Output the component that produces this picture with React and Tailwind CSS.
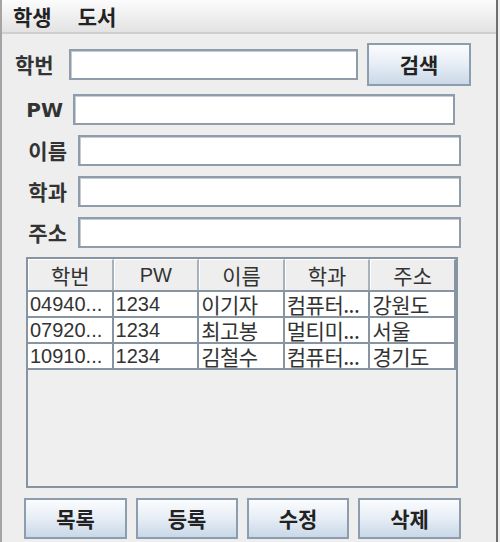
import React from 'react'

const font = { fontFamily: '"Noto Sans CJK KR", "Liberation Sans", sans-serif' }

const rows = [
  ['04940...', '1234', '이기자', '컴퓨터...', '강원도'],
  ['07920...', '1234', '최고봉', '멀티미...', '서울'],
  ['10910...', '1234', '김철수', '컴퓨터...', '경기도'],
]

const headers = ['학번', 'PW', '이름', '학과', '주소']

const Field = ({ className }) => (
  <div className={`h-[31px] bg-white border-2 border-[#8f9caa] shadow-[inset_1px_1px_0_#c5ccd4] ${className}`} />
)

const Btn = ({ children, className }) => (
  <button className={`h-[41px] bg-gradient-to-b from-[#fbfcfe] via-[#e6edf5] to-[#c9d8e8] border-2 border-[#8d9db0] text-[21px] font-bold text-[#222] leading-none ${className}`}>
    {children}
  </button>
)

export default function App() {
  return (
    <div className="w-[500px] h-[542px] bg-[#eeeeee] overflow-hidden" style={font}>
      <div className="w-[498px] h-[542px] border-l-2 border-r-2 border-l-[#a4a4a4] border-r-[#6f6f6f] flex flex-col">
        <div className="h-[34px] shrink-0 bg-gradient-to-b from-[#fcfcfc] to-[#e3e3e3] border-b-2 border-[#cfcfcf] flex items-center text-[21px] font-bold text-[#222] leading-none">
          <span className="ml-[11px]">학생</span>
          <span className="ml-[26px]">도서</span>
        </div>

        <div className="flex items-center mt-[9px] h-[43px]">
          <span className="ml-[13px] w-[46px] text-[21px] font-bold text-[#333] leading-none">학번</span>
          <Field className="ml-[8px] w-[289px]" />
          <Btn className="ml-[9px] w-[104px] h-[43px]">검색</Btn>
        </div>

        <div className="flex items-center mt-[8px]">
          <span className="w-[61px] text-right text-[20px] font-bold text-[#333] leading-none" style={{ fontFamily: '"DejaVu Sans", sans-serif' }}>PW</span>
          <Field className="ml-[10px] w-[382px]" />
        </div>

        {['이름', '학과', '주소'].map((l) => (
          <div key={l} className="flex items-center mt-[10px]">
            <span className="w-[65px] text-right text-[21px] font-bold text-[#333] leading-none">{l}</span>
            <Field className="ml-[11px] w-[383px]" />
          </div>
        ))}

        <div className="mt-[9px] ml-[24px] w-[432px] h-[231px] border-2 border-[#8795a3] bg-[#efefef] flex flex-col">
          <div className="flex h-[33px] border-b-2 border-[#8795a3]">
            {headers.map((h, i) => (
              <div
                key={h}
                className={`flex-1 flex items-center justify-center bg-[#eeeeee] text-[21px] text-[#333] leading-[24px] border-r-2 border-[#a7b1bb] border-t border-l border-t-white border-l-white ${i === 4 ? 'border-r-[#8795a3]' : ''}`}
                style={h === 'PW' ? { fontFamily: '"Liberation Sans", sans-serif', fontSize: '20px' } : undefined}
              >
                {h}
              </div>
            ))}
          </div>
          {rows.map((r, ri) => (
            <div key={ri} className="flex h-[26px] border-b-2 border-[#8795a3] w-[428px]">
              {r.map((c, ci) => (
                <div
                  key={ci}
                  className={`flex-1 bg-white flex items-center pl-[2px] text-[#333] leading-[22px] border-r-2 border-[#8795a3] whitespace-nowrap ${ci < 2 ? 'text-[20px]' : 'text-[21px] tracking-[-0.5px]'}`}
                  style={ci < 2 ? { fontFamily: '"Liberation Sans", sans-serif' } : undefined}
                >
                  {c}
                </div>
              ))}
            </div>
          ))}
        </div>

        <div className="flex mt-[10px] ml-[22px] gap-[9px]">
          <Btn className="w-[103px]">목록</Btn>
          <Btn className="w-[102px]">등록</Btn>
          <Btn className="w-[102px]">수정</Btn>
          <Btn className="w-[103px]">삭제</Btn>
        </div>
      </div>
    </div>
  )
}
